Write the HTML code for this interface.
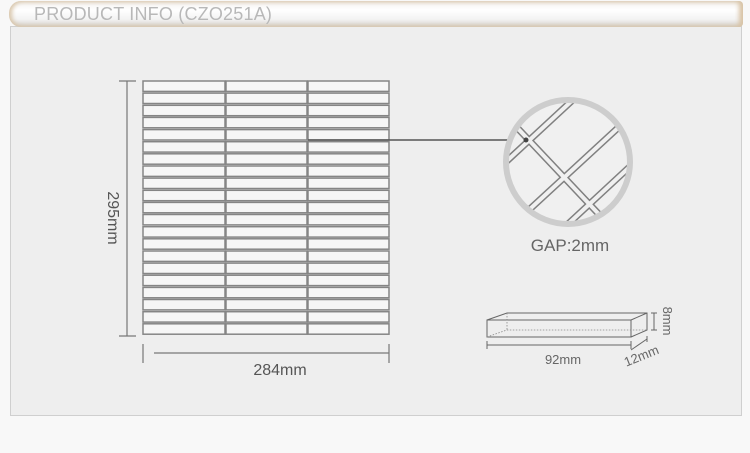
<!DOCTYPE html>
<html><head><style>
html,body{margin:0;padding:0;}
body{width:750px;height:453px;background:#f8f8f8;position:relative;overflow:hidden;font-family:"Liberation Sans",sans-serif;}
.panel{position:absolute;left:10px;top:26px;width:730px;height:388px;background:#eeeeee;border:1px solid #cfcfcf;}
.hdr{position:absolute;left:9px;top:1px;width:734px;height:26px;border-radius:12px 4px 4px 12px;
background:linear-gradient(#f2f0ed 0%,#ffffff 35%,#f3f3f3 70%,#d4d0ca 100%);box-shadow:inset 3px 0 4px #d9c7ad, inset -4px 0 5px #d8c3a5;}
.hdr span{position:absolute;left:25px;top:3px;font-size:18px;color:#b8b8b8;letter-spacing:0.2px;}
</style></head><body>
<div class="panel"></div>
<div class="hdr"><span>PRODUCT INFO (CZO251A)</span></div>
<svg width="750" height="453" style="position:absolute;left:0;top:0">
<defs><clipPath id="c"><circle cx="568" cy="162" r="60"/></clipPath></defs>
<g id="grid" fill="#f6f6f6" stroke="#858585" stroke-width="1.5">
</g>
<g stroke="#777" stroke-width="1.2">
<line x1="127" y1="81" x2="127" y2="336"/>
<line x1="119" y1="81" x2="136" y2="81"/>
<line x1="119" y1="336" x2="136" y2="336"/>
<line x1="143" y1="344" x2="143" y2="363"/>
<line x1="154" y1="353" x2="389" y2="353"/>
<line x1="389" y1="344" x2="389" y2="363"/>
</g>
<text x="0" y="0" font-size="16" fill="#555" transform="translate(108,218) rotate(90)" text-anchor="middle">295mm</text>
<text x="280" y="375" font-size="16" fill="#555" text-anchor="middle">284mm</text>
<line x1="308" y1="140" x2="526" y2="140" stroke="#555" stroke-width="1.5"/>
<g clip-path="url(#c)">
<circle cx="568" cy="162" r="60" fill="#f0f0f0"/>
<g stroke="#808080" stroke-width="7" fill="none">
<line x1="495" y1="172" x2="590" y2="84"/>
<line x1="505" y1="232" x2="645" y2="103"/>
<line x1="540" y1="250" x2="650" y2="148"/>
<line x1="508" y1="118" x2="610" y2="226"/>
</g>
<g stroke="#f0f0f0" stroke-width="4" fill="none">
<line x1="495" y1="172" x2="590" y2="84"/>
<line x1="505" y1="232" x2="645" y2="103"/>
<line x1="540" y1="250" x2="650" y2="148"/>
<line x1="508" y1="118" x2="610" y2="226"/>
</g>
</g>
<circle cx="568" cy="162" r="62" fill="none" stroke="#cdcdcd" stroke-width="6"/>
<circle cx="526" cy="140" r="2.5" fill="#444"/>
<text x="570" y="251" font-size="17" fill="#666" text-anchor="middle">GAP:2mm</text>
<g stroke="#666" stroke-width="1" fill="none">
<rect x="487" y="320" width="144" height="17"/>
<polyline points="487,320 507,313 647,313 647,330 631,337"/>
<line x1="631" y1="320" x2="647" y2="313"/>
<line x1="654" y1="313" x2="654" y2="330"/><line x1="651" y1="313" x2="657" y2="313"/><line x1="651" y1="330" x2="657" y2="330"/>
<line x1="487" y1="345" x2="631" y2="345"/><line x1="487" y1="341" x2="487" y2="349"/><line x1="631" y1="341" x2="631" y2="349"/>
<line x1="631" y1="350" x2="647" y2="339"/><line x1="647" y1="336" x2="647" y2="342"/>
</g>
<g stroke="#888" stroke-width="0.8" stroke-dasharray="1.5,1.5" fill="none">
<polyline points="487,337 507,330 647,330"/><line x1="507" y1="313" x2="507" y2="330"/>
</g>
<text x="0" y="0" font-size="13" fill="#666" transform="translate(663,321) rotate(90)" text-anchor="middle">8mm</text>
<text x="563" y="364" font-size="13" fill="#666" text-anchor="middle">92mm</text>
<text x="0" y="0" font-size="13" fill="#666" transform="translate(643,360) rotate(-22)" text-anchor="middle">12mm</text>
</svg>
<script>
var g=document.getElementById('grid'),s='';
var cols=[[143,82],[226,81],[308,81]];
for(var r=0;r<21;r++){var y=81+r*12.14;for(var c=0;c<3;c++){s+='<rect x="'+cols[c][0]+'" y="'+y.toFixed(1)+'" width="'+cols[c][1]+'" height="10.4"/>';}}
g.innerHTML=s;
</script>
</body></html>
